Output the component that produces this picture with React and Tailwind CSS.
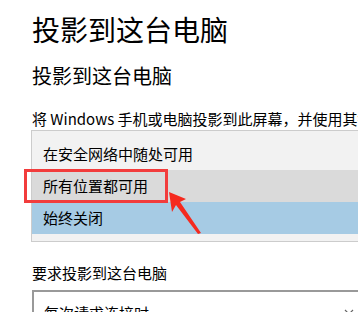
import React from 'react';

const font = { fontFamily: '"Noto Sans CJK SC", "Noto Sans", sans-serif' };

const options = [
  { label: '在安全网络中随处可用', bg: 'bg-[#f2f2f2]' },
  { label: '所有位置都可用', bg: 'bg-[#dadada]' },
  { label: '始终关闭', bg: 'bg-[#a6cbe4]' },
];

const App = () => {
  return (
    <div
      className="relative w-[358px] h-[312px] overflow-hidden bg-white text-black pl-[32px]"
      style={font}
    >
      <h1 className="mt-[11px] text-[28px] leading-[36px] font-normal">投影到这台电脑</h1>

      <h2 className="mt-[15px] text-[20px] leading-[28px] font-normal">投影到这台电脑</h2>

      <p className="mt-[18px] text-[15px] leading-[22px] whitespace-nowrap">
        将 Windows 手机或电脑投影到此屏幕，并使用其键盘、鼠标和其他设备。
      </p>

      {/* dropdown open */}
      <div className="relative -ml-px w-[340px] border border-[#cccccc] bg-[#f2f2f2] py-[7px]">
        {options.map((o) => (
          <div
            key={o.label}
            className={`h-[32px] flex items-center pl-[11px] text-[15px] ${o.bg}`}
          >
            {o.label}
          </div>
        ))}
        {/* highlight box */}
        <div className="absolute left-[-8px] top-[38px] w-[144px] h-[34px] border-[3px] border-[#f23c3c]" />
      </div>

      <div className="mt-[20px] text-[15px] leading-[22px]">要求投影到这台电脑</div>

      <div className="mt-[6px] w-[330px] h-[32px] border-2 border-[#999999] flex items-center justify-between pl-[10px] pr-[6px] text-[15px]">
        <span className="mt-[14px]">每次请求连接时</span>
        <svg width="10" height="6" viewBox="0 0 10 6" className="mt-[12px]">
          <path d="M1 1 L5 5 L9 1" fill="none" stroke="#666" strokeWidth="1.2" />
        </svg>
      </div>

      {/* arrow */}
      <svg className="absolute left-0 top-0 pointer-events-none" width="358" height="312">
        <polygon
          points="169,192 186,199 180,202 201,233 198,234 176,205 172,212"
          fill="#f52a1f"
        />
      </svg>
    </div>
  );
};

export default App;
